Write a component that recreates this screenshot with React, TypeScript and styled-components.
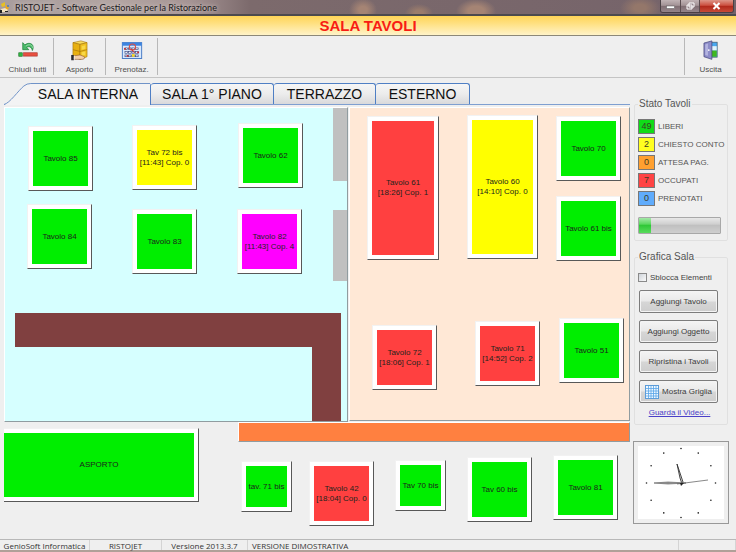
import React, { useState } from "react";
import styled, { createGlobalStyle } from "styled-components";

const GlobalStyle = createGlobalStyle`
  *, *::before, *::after { box-sizing: border-box; }
  body { margin: 0; background: #efefef; }
  button, input { font: inherit; margin: 0; }
`;

const sans = `"Liberation Sans", Arial, sans-serif`;
const humanist = `"Open Sans", "Noto Sans", sans-serif`;

const Window = styled.div`
  display: flex;
  flex-direction: column;
  min-height: 100vh;
  font-family: ${sans};
  font-size: 8px;
  color: #444;
  background: #efefef;
`;

/* ---------- title bar ---------- */

const TitleBar = styled.header`
  display: flex;
  align-items: flex-start;
  height: 16px;
  border-bottom: 2px solid #4c4a4e;
  overflow: hidden;
  background:
    radial-gradient(ellipse 14px 12px at 363px 10px, #a58474 30%, transparent),
    radial-gradient(ellipse 14px 9px at 419px 13px, #9b7c6c 30%, transparent),
    radial-gradient(ellipse 20px 12px at 476px 11px, #a58474 40%, transparent),
    radial-gradient(ellipse 20px 12px at 640px 8px, #94776a 30%, transparent),
    linear-gradient(90deg, #a89d9d 0, #b3a5a2 120px, #a59494 190px, #7c6a6c 250px, #75636a 100%);
`;

const AppTitle = styled.h1`
  display: flex;
  align-items: center;
  gap: 4px;
  flex: 1;
  margin: 0;
  height: 15px;
  font-family: Lato, sans-serif;
  font-size: 9px;
  font-weight: 400;
  color: #1c1a1c;
  text-shadow: 0 0 4px #e0d6d2;
`;

const WindowButtons = styled.div`
  display: flex;
  margin-right: 2px;
  height: 13px;
  border: 1px solid #4a4044;
  border-top: 0;
  border-radius: 0 0 3px 3px;
  overflow: hidden;
`;

const WindowButton = styled.button<{ $close?: boolean }>`
  display: grid;
  place-items: center;
  width: ${(p) => (p.$close ? 34 : 19)}px;
  padding: 0;
  border: 0;
  border-left: 1px solid #5a4c50;
  &:first-child { border-left: 0; }
  background: ${(p) =>
    p.$close
      ? "linear-gradient(#dd9588, #cc5040 45%, #b0281a 50%, #c84a38)"
      : "linear-gradient(#c0b3b5, #a39396 45%, #7f6d72 50%, #95858a)"};
`;

/* ---------- banner and toolbar ---------- */

const Banner = styled.h2`
  margin: 0;
  height: 20px;
  border-bottom: 1px solid #8c8878;
  background: linear-gradient(#ffd558, #ffdf7c 35%, #fff3c8);
  color: #f81c14;
  font-size: 15px;
  line-height: 19px;
  font-weight: 700;
  text-align: center;
`;

const Toolbar = styled.nav`
  display: flex;
  justify-content: space-between;
  height: 42px;
  padding: 2px 0 2px 2px;
  border-bottom: 1px solid #c4c4c4;
`;

const ToolGroup = styled.div`
  display: flex;
`;

const ToolButton = styled.button<{ $end?: boolean }>`
  display: flex;
  flex-direction: column;
  align-items: center;
  gap: 3px;
  width: 52px;
  padding: 2px 0 0;
  border: 0 solid #b8b8b8;
  border-right-width: ${(p) => (p.$end ? 0 : 1)}px;
  border-left-width: ${(p) => (p.$end ? 1 : 0)}px;
  background: none;
  color: #505050;
  line-height: 10px;
  white-space: nowrap;
`;

/* ---------- main area ---------- */

const Main = styled.main`
  display: flex;
  flex: 1;
  padding-top: 5px;
`;

const PlanColumn = styled.section`
  display: flex;
  flex-direction: column;
  flex: 1;
  min-width: 0;
  padding-left: 4px;
`;

const Tabs = styled.div`
  display: flex;
  height: 22px;
  border-bottom: 1px solid #7f9fd0;
`;

const Tab = styled.button<{ $width: number; $active?: boolean }>`
  position: relative;
  isolation: isolate;
  width: ${(p) => p.$width}px;
  height: ${(p) => (p.$active ? 22 : 21)}px;
  padding: ${(p) => (p.$active ? "0 0 0 22px" : "0")};
  border: 1px solid #4f7fc4;
  border-left-width: 0;
  border-bottom: 0;
  border-radius: 3px 3px 0 0;
  background: linear-gradient(#f6f6f6, #ececec 50%, #d9d9db);
  color: #101010;
  font-size: 14px;
  line-height: 20px;
  white-space: nowrap;
  ${(p) => p.$active && "border: 0; border-right: 1px solid #4f7fc4; background: none;"}
`;

const TabEdge = styled.svg`
  position: absolute;
  inset: 0;
  z-index: -1;
  width: 100%;
  height: 22px;
`;

const Plan = styled.div`
  position: relative;
  flex: 1;
  min-height: 434px;
  overflow: hidden;
`;

type Box = { x: number; y: number; w: number; h: number };

const Zone = styled.div<{ $box: Box; $fill: string; $raised?: boolean }>`
  position: absolute;
  left: ${(p) => p.$box.x}px;
  top: ${(p) => p.$box.y}px;
  width: ${(p) => p.$box.w}px;
  height: ${(p) => p.$box.h}px;
  background: ${(p) => p.$fill};
  ${(p) =>
    p.$raised &&
    "border: 1px solid #fff; border-right-color: #909ca0; border-bottom-color: #909ca0;"}
`;

const WideZone = styled(Zone)`
  width: auto;
  right: 0;
`;

const fills = {
  free: "#00ee00",
  bill: "#ffff00",
  busy: "#ff4040",
  alert: "#ff00ff",
};

const TableTile = styled.button<{ $box: Box; $state: keyof typeof fills }>`
  position: absolute;
  left: ${(p) => p.$box.x}px;
  top: ${(p) => p.$box.y}px;
  width: ${(p) => p.$box.w}px;
  height: ${(p) => p.$box.h}px;
  padding: 4px;
  border: 1px solid #f2f2f2;
  border-right-color: #585858;
  border-bottom-color: #585858;
  background:
    linear-gradient(${(p) => fills[p.$state]}, ${(p) => fills[p.$state]}) content-box,
    #fff;
  color: #1c241c;
  line-height: 10px;
  text-align: center;
  white-space: pre;
`;

/* ---------- side panel ---------- */

const Side = styled.aside`
  display: flex;
  flex-direction: column;
  flex: 0 0 106px;
  min-width: 0;
  gap: 10px;
  padding: 15px 7px 0 3px;
`;

const Group = styled.fieldset`
  display: flex;
  flex-direction: column;
  min-width: 0;
  margin: 0 1px;
  padding: 9px 6px 6px 3px;
  border: 1px solid #e0e0e0;
  border-radius: 2px;
`;

const Legend = styled.legend`
  padding: 0 1px;
  font-size: 10px;
  line-height: 12px;
  color: #555;
`;

const StatusList = styled.dl`
  display: grid;
  grid-template-columns: 17px minmax(0, 1fr);
  gap: 3px;
  margin: 0 0 11px;
  line-height: 15px;
  white-space: nowrap;
`;

const Count = styled.dt<{ $fill: string }>`
  height: 15px;
  border: 1px solid #777;
  background: ${(p) => p.$fill};
  color: #3c3c24;
  font-size: 9px;
  line-height: 13px;
  text-align: center;
`;

const CountLabel = styled.dd`
  margin: 0;
  color: #555;
`;

const Gauge = styled.div`
  height: 17px;
  border: 1px solid #a8a8a8;
  border-radius: 1px;
  background: linear-gradient(#e8e8e8, #d0d0d0 40%, #c0c0c0 50%, #cfcfcf);
`;

const GaugeFill = styled.div`
  height: 100%;
  background: linear-gradient(#a4e8a8, #5cd860 40%, #30c838 50%, #58dc5c);
`;

const CheckLabel = styled.label`
  display: flex;
  align-items: center;
  gap: 3px;
  height: 10px;
  margin-bottom: 8px;
  white-space: nowrap;
`;

const CheckBox = styled.input`
  appearance: none;
  width: 9px;
  height: 9px;
  border: 1px solid #8a8a8a;
  background: linear-gradient(135deg, #cfd4da, #fafafa);
  &:checked { background: #4f7fc4; }
`;

const ButtonStack = styled.div`
  display: flex;
  flex-direction: column;
  gap: 7px;
  margin: 0 3px 0 1px;
`;

const PushButton = styled.button`
  display: flex;
  align-items: center;
  justify-content: center;
  gap: 3px;
  height: 23px;
  padding: 0;
  border: 1px solid #7c7c7c;
  border-radius: 2px;
  background: linear-gradient(#f4f4f4, #e9e9e9 48%, #d6d6d6 52%, #cdcdcd);
  box-shadow: inset 0 0 0 1px #f4f4f4;
  color: #3c3c3c;
  white-space: nowrap;
`;

const VideoLink = styled.a`
  align-self: center;
  margin-top: 5px;
  color: #4a40c8;
  line-height: 10px;
`;

const ClockFrame = styled.div`
  height: 83px;
  margin-top: 6px;
  padding: 4px;
  border: 1px solid #989898;
  background: linear-gradient(#fff, #fff) content-box;
`;

/* ---------- status bar ---------- */

const StatusBar = styled.footer`
  display: flex;
  height: 13px;
  border-top: 1px solid #b8b8b8;
  border-bottom: 2px solid #b0a098;
  font-family: ${humanist};
  line-height: 12px;
  color: #333;
`;

const StatusCell = styled.span<{ $width?: number; $left?: boolean }>`
  flex: ${(p) => (p.$width ? `0 0 ${p.$width}px` : "1")};
  padding-left: ${(p) => (p.$left ? 4 : 0)}px;
  border-right: 1px solid #d4d4d4;
  text-align: ${(p) => (p.$left ? "left" : "center")};
  white-space: nowrap;
`;

/* ---------- drawings ---------- */

const AppIcon = () => (
  <svg width="11" height="13" viewBox="0 0 11 13">
    <path d="M1 3l4-2v4l-3 1z" fill="#e8c020" />
    <path d="M6 4l3 1-1 4-3-1z" fill="#f0a818" />
    <path d="M1 8l4-1 3 2-2 2-4 0z" fill="#f4e4c0" />
    <path d="M0 9h2v3H0zM5 10h3v1H5z" fill="#222" />
    <circle cx="8" cy="5" r="1" fill="#3878d0" />
  </svg>
);

const CloseAllIcon = () => (
  <svg width="24" height="25" viewBox="0 0 24 25">
    <path d="M6 3v8h7L10.500 8.500C13 6.500 16 8 17 12 20 6 15 1 8.500 5.500Z" fill="#48b868" stroke="#1c8038" strokeWidth="0.8" />
    <path d="M9.500 7C13 4 17 5.500 17.300 9" fill="none" stroke="#b0e8b8" strokeWidth="0.8" />
    <rect x="1.500" y="14.500" width="4" height="4" fill="#30b840" stroke="#1c7028" strokeWidth="0.7" />
    <rect x="7" y="14.500" width="15.500" height="3.800" fill="#e85040" stroke="#a83028" strokeWidth="0.7" />
  </svg>
);

const CrateIcon = () => (
  <svg width="24" height="25" viewBox="0 0 24 25">
    <path d="M4 3l9-2 7 2-8 2z" fill="#f8dc60" stroke="#a87808" strokeWidth="0.7" />
    <path d="M4 3l8 2v17l-8-3z" fill="#e8b010" stroke="#a87808" strokeWidth="0.7" />
    <path d="M12 5l8-2v16l-8 3z" fill="#f0c020" stroke="#a87808" strokeWidth="0.7" />
    <path d="M4 11l8 2 8-2" fill="none" stroke="#a87808" strokeWidth="0.8" />
    <path d="M14 7l4-1v4l-4 1zM14 14l4-1v4l-4 1z" fill="#f8d848" />
    <path d="M5 18l7-1 5 2c1 2-1 3-3 3H6z" fill="#f4cfa8" stroke="#8c5838" strokeWidth="0.7" />
    <path d="M2 17h3v6H2z" fill="#282830" />
    <path d="M5 18h1v4H5z" fill="#fff" />
  </svg>
);

const CalendarIcon = () => (
  <svg width="24" height="25" viewBox="0 0 24 25">
    <rect x="1" y="3" width="22" height="18" fill="#d8e8fc" stroke="#3870c0" />
    <rect x="1" y="3" width="22" height="3.500" fill="#3c84e0" />
    <g fill="#fff" stroke="#303c78" strokeWidth="0.7">
      {[9, 13, 17].map((y) => [4, 8, 12, 16].map((x) => <rect key={`${x}-${y}`} x={x} y={y} width="3" height="2" />))}
    </g>
    <circle cx="12.500" cy="8" r="3.500" fill="none" stroke="#d85048" strokeWidth="1.300" />
    <path d="M11 10l4 5" stroke="#d83028" strokeWidth="1" />
    <path d="M3 9h2v2H3zM18 13h2v2h-2zM6 17h2v2H6z" fill="#c03030" />
    <rect x="12" y="16" width="3" height="3" fill="#f8d820" />
  </svg>
);

const ExitIcon = () => (
  <svg width="24" height="25" viewBox="0 0 24 25">
    <rect x="11" y="2.500" width="8" height="17" fill="#48a8f0" stroke="#405868" strokeWidth="0.8" />
    <rect x="11.500" y="7" width="7" height="5" fill="#e0f4fc" />
    <rect x="11.500" y="12" width="7" height="7" fill="#40b820" />
    <path d="M4 3.500l9-2.500v21l-9-3z" fill="#8c8cc8" stroke="#404078" strokeWidth="0.8" />
    <path d="M5.500 5l3-1v14l-3-1z" fill="#b4b4e0" />
    <circle cx="9.500" cy="11.500" r="1" fill="#fff" />
  </svg>
);

const GridIcon = () => (
  <svg width="14" height="14" viewBox="0 0 14 14">
    <rect x="0.500" y="0.500" width="13" height="13" fill="#f0f8ff" stroke="#5c9cd8" />
    <path d="M3.500 1v12M6 1v12M8.500 1v12M11 1v12M1 3.500h12M1 6h12M1 8.500h12M1 11h12" stroke="#58a4e8" strokeWidth="0.800" />
  </svg>
);

const Clock = () => (
  <svg width="100%" height="100%" viewBox="-43 -37 86 73" role="img" aria-label="Orologio">
    {Array.from({ length: 12 }, (_, i) => {
      const a = (i * Math.PI) / 6;
      return <circle key={i} cx={Math.sin(a) * 34.500} cy={-Math.cos(a) * 34.500} r="0.800" fill="#222" />;
    })}
    <path d="M-4-19l3 14 2 6 1-2z" fill="#ddd" stroke="#333" strokeWidth="0.900" />
    <path d="M-27 0L-13-1 5 0-13 1z" fill="#999" stroke="#666" strokeWidth="0.700" />
    <path d="M-4 1L27-3" stroke="#555" strokeWidth="0.700" />
    <path d="M-1 0l1 3 3-3z" fill="#222" />
  </svg>
);

/* ---------- data ---------- */

const rooms = [
  { label: "SALA INTERNA", width: 147 },
  { label: "SALA 1° PIANO", width: 123 },
  { label: "TERRAZZO", width: 102 },
  { label: "ESTERNO", width: 94 },
];

const tables: { label: string; state: keyof typeof fills; box: Box }[] = [
  { label: "Tavolo 85", state: "free", box: { x: 24, y: 21, w: 65, h: 65 } },
  { label: "Tav 72 bis\n[11:43] Cop. 0", state: "bill", box: { x: 128, y: 20, w: 65, h: 65 } },
  { label: "Tavolo 62", state: "free", box: { x: 234, y: 18, w: 65, h: 65 } },
  { label: "Tavolo 84", state: "free", box: { x: 23, y: 99, w: 65, h: 65 } },
  { label: "Tavolo 83", state: "free", box: { x: 128, y: 104, w: 65, h: 65 } },
  { label: "Tavolo 82\n[11:43] Cop. 4", state: "alert", box: { x: 233, y: 104, w: 65, h: 65 } },
  { label: "Tavolo 61\n[18:26] Cop. 1", state: "busy", box: { x: 363, y: 11, w: 72, h: 144 } },
  { label: "Tavolo 60\n[14:10] Cop. 0", state: "bill", box: { x: 463, y: 10, w: 71, h: 144 } },
  { label: "Tavolo 70", state: "free", box: { x: 552, y: 11, w: 65, h: 65 } },
  { label: "Tavolo 61 bis", state: "free", box: { x: 552, y: 91, w: 65, h: 65 } },
  { label: "Tavolo 72\n[18:06] Cop. 1", state: "busy", box: { x: 368, y: 220, w: 65, h: 65 } },
  { label: "Tavolo 71\n[14:52] Cop. 2", state: "busy", box: { x: 471, y: 216, w: 65, h: 65 } },
  { label: "Tavolo 51", state: "free", box: { x: 555, y: 213, w: 65, h: 65 } },
  { label: "ASPORTO", state: "free", box: { x: -5, y: 323, w: 200, h: 74 } },
  { label: "tav. 71 bis", state: "free", box: { x: 237, y: 356, w: 51, h: 51 } },
  { label: "Tavolo 42\n[18:04] Cop. 0", state: "busy", box: { x: 305, y: 356, w: 65, h: 65 } },
  { label: "Tav 70 bis", state: "free", box: { x: 391, y: 355, w: 51, h: 51 } },
  { label: "Tav 60 bis", state: "free", box: { x: 463, y: 352, w: 65, h: 65 } },
  { label: "Tavolo 81", state: "free", box: { x: 549, y: 350, w: 65, h: 65 } },
];

const counts = [
  { n: 49, label: "LIBERI", fill: "#10dc18" },
  { n: 2, label: "CHIESTO CONTO", fill: "#ffff20" },
  { n: 0, label: "ATTESA PAG.", fill: "#ffa030" },
  { n: 7, label: "OCCUPATI", fill: "#ff4444" },
  { n: 0, label: "PRENOTATI", fill: "#60acfc" },
];

export default function App() {
  const [unlocked, setUnlocked] = useState(false);
  const occupancy = 15;

  return (
    <Window>
      <GlobalStyle />
      <TitleBar>
        <AppTitle>
          <AppIcon />
          RISTOJET - Software Gestionale per la Ristorazione
        </AppTitle>
        <WindowButtons>
          <WindowButton aria-label="Riduci a icona">
            <svg width="9" height="8"><rect x="0.500" y="4" width="8" height="2.500" fill="#fff" stroke="#555" strokeWidth="0.500" /></svg>
          </WindowButton>
          <WindowButton aria-label="Ripristina">
            <svg width="9" height="8"><path d="M3 1h5v4H3zM1 3h5v4H1z" fill="#94848a" stroke="#fff" /></svg>
          </WindowButton>
          <WindowButton $close aria-label="Chiudi">
            <svg width="9" height="8"><path d="M1.500 1l6 6M7.500 1l-6 6" stroke="#fff" strokeWidth="2" /></svg>
          </WindowButton>
        </WindowButtons>
      </TitleBar>
      <Banner>SALA TAVOLI</Banner>
      <Toolbar>
        <ToolGroup>
          <ToolButton><CloseAllIcon />Chiudi tutti</ToolButton>
          <ToolButton><CrateIcon />Asporto</ToolButton>
          <ToolButton><CalendarIcon />Prenotaz.</ToolButton>
        </ToolGroup>
        <ToolButton $end><ExitIcon />Uscita</ToolButton>
      </Toolbar>

      <Main>
        <PlanColumn>
          <Tabs role="tablist">
            {rooms.map((room, i) => (
              <Tab key={room.label} role="tab" aria-selected={i === 0} $active={i === 0} $width={room.width}>
                {i === 0 && (
                  <TabEdge viewBox="0 0 147 22" preserveAspectRatio="none">
                    <path d="M0 22C6 20 14 8 20 3Q23 0.500 27 0.500H147V22Z" fill="#f3f3f4" />
                    <path d="M0 21.500C6 20 14 8 20 3Q23 0.500 27 0.500H147" fill="none" stroke="#6f93c8" />
                  </TabEdge>
                )}
                {room.label}
              </Tab>
            ))}
          </Tabs>
          <Plan>
            <Zone $box={{ x: 0, y: 2, w: 344, h: 315 }} $fill="#d6ffff" $raised />
            <WideZone $box={{ x: 345, y: 2, w: 0, h: 314 }} $fill="#ffe8d6" $raised />
            <Zone $box={{ x: 329, y: 3, w: 14, h: 73 }} $fill="#c0c0c0" />
            <Zone $box={{ x: 329, y: 105, w: 14, h: 71 }} $fill="#c0c0c0" />
            <Zone $box={{ x: 11, y: 208, w: 326, h: 34 }} $fill="#804040" />
            <Zone $box={{ x: 308, y: 242, w: 29, h: 74 }} $fill="#804040" />
            <WideZone $box={{ x: 234, y: 317, w: 0, h: 20 }} $fill="#ff8040" $raised />
            {tables.map((t) => (
              <TableTile key={t.label} $box={t.box} $state={t.state}>{t.label}</TableTile>
            ))}
          </Plan>
        </PlanColumn>

        <Side>
          <Group>
            <Legend>Stato Tavoli</Legend>
            <StatusList>
              {counts.map((c) => (
                <React.Fragment key={c.label}>
                  <Count $fill={c.fill}>{c.n}</Count>
                  <CountLabel>{c.label}</CountLabel>
                </React.Fragment>
              ))}
            </StatusList>
            <Gauge role="progressbar" aria-valuenow={occupancy} aria-label="Occupazione">
              <GaugeFill style={{ width: `${occupancy}%` }} />
            </Gauge>
          </Group>
          <Group>
            <Legend>Grafica Sala</Legend>
            <CheckLabel>
              <CheckBox type="checkbox" checked={unlocked} onChange={(e) => setUnlocked(e.target.checked)} />
              Sblocca Elementi
            </CheckLabel>
            <ButtonStack>
              <PushButton>Aggiungi Tavolo</PushButton>
              <PushButton>Aggiungi Oggetto</PushButton>
              <PushButton>Ripristina i Tavoli</PushButton>
              <PushButton><GridIcon />Mostra Griglia</PushButton>
            </ButtonStack>
            <VideoLink href="#video">Guarda il Video...</VideoLink>
          </Group>
          <ClockFrame><Clock /></ClockFrame>
        </Side>
      </Main>

      <StatusBar>
        <StatusCell $width={90}>GenioSoft Informatica</StatusCell>
        <StatusCell $width={72}>RISTOJET</StatusCell>
        <StatusCell $width={86}>Versione 2013.3.7</StatusCell>
        <StatusCell $left>VERSIONE DIMOSTRATIVA</StatusCell>
        <StatusCell $width={57} />
      </StatusBar>
    </Window>
  );
}
